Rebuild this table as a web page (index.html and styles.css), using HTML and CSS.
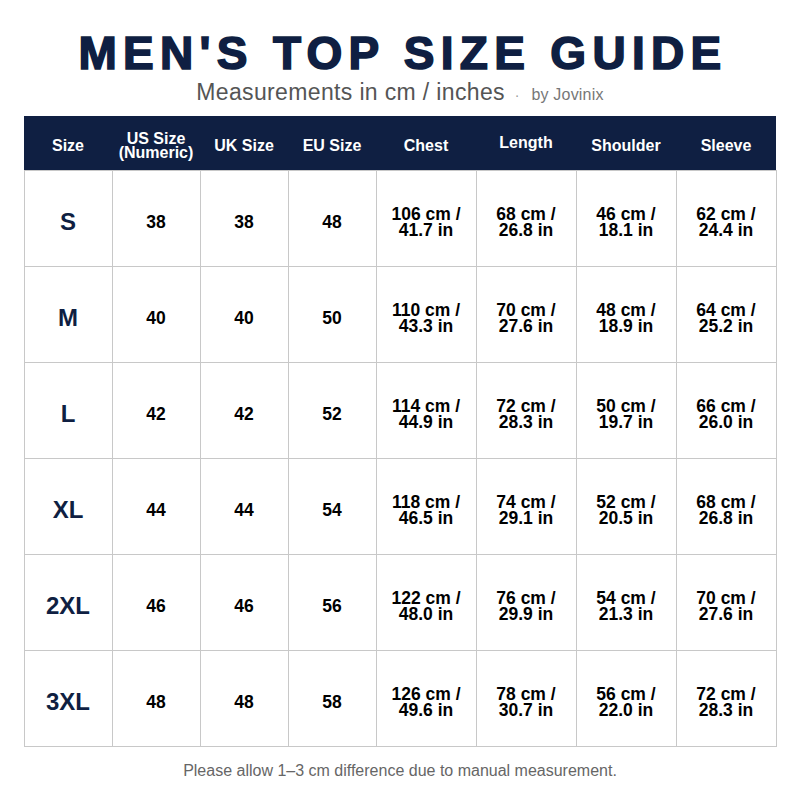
FILE: index.html
```html
<!DOCTYPE html>
<html>
<head>
<meta charset="utf-8">
<link rel="stylesheet" href="styles.css">
</head>
<body>
<div class="page">
  <h1 class="title">MEN'S TOP SIZE GUIDE</h1>
  <div class="subtitle">Measurements in cm / inches <span class="dot">·</span> <span class="brand">by Jovinix</span></div>
  <table class="chart">
    <colgroup>
      <col class="c-sm"><col class="c-sm"><col class="c-sm"><col class="c-sm">
      <col class="c-lg"><col class="c-lg"><col class="c-lg"><col class="c-lg">
    </colgroup>
    <thead>
      <tr>
        <th>Size</th>
        <th class="two">US Size<br>(Numeric)</th>
        <th>UK Size</th>
        <th>EU Size</th>
        <th>Chest</th>
        <th><span class="raised">Length</span></th>
        <th>Shoulder</th>
        <th>Sleeve</th>
      </tr>
    </thead>
    <tbody>
      <tr><td class="size">S</td><td>38</td><td>38</td><td>48</td><td>106 cm /<br>41.7 in</td><td>68 cm /<br>26.8 in</td><td>46 cm /<br>18.1 in</td><td>62 cm /<br>24.4 in</td></tr>
      <tr><td class="size">M</td><td>40</td><td>40</td><td>50</td><td>110 cm /<br>43.3 in</td><td>70 cm /<br>27.6 in</td><td>48 cm /<br>18.9 in</td><td>64 cm /<br>25.2 in</td></tr>
      <tr><td class="size">L</td><td>42</td><td>42</td><td>52</td><td>114 cm /<br>44.9 in</td><td>72 cm /<br>28.3 in</td><td>50 cm /<br>19.7 in</td><td>66 cm /<br>26.0 in</td></tr>
      <tr><td class="size">XL</td><td>44</td><td>44</td><td>54</td><td>118 cm /<br>46.5 in</td><td>74 cm /<br>29.1 in</td><td>52 cm /<br>20.5 in</td><td>68 cm /<br>26.8 in</td></tr>
      <tr><td class="size">2XL</td><td>46</td><td>46</td><td>56</td><td>122 cm /<br>48.0 in</td><td>76 cm /<br>29.9 in</td><td>54 cm /<br>21.3 in</td><td>70 cm /<br>27.6 in</td></tr>
      <tr><td class="size">3XL</td><td>48</td><td>48</td><td>58</td><td>126 cm /<br>49.6 in</td><td>78 cm /<br>30.7 in</td><td>56 cm /<br>22.0 in</td><td>72 cm /<br>28.3 in</td></tr>
    </tbody>
  </table>
  <p class="note">Please allow 1–3 cm difference due to manual measurement.</p>
</div>
</body>
</html>
```

FILE: styles.css
```css
html, body {
  margin: 0;
  padding: 0;
  background: #ffffff;
}
.page {
  width: 800px;
  display: flex;
  flex-direction: column;
  align-items: center;
  font-family: "Liberation Sans", Arial, sans-serif;
}
.title {
  margin: 30px 0 0 6px;
  font-size: 46px;
  line-height: 46px;
  font-weight: 700;
  letter-spacing: 6.3px;
  color: #0f1f42;
  -webkit-text-stroke: 1.6px #0f1f42;
}
.subtitle {
  margin-top: 3px;
  font-size: 23px;
  line-height: 26px;
  letter-spacing: 0.35px;
  color: #555555;
}
.dot {
  font-size: 14px;
  line-height: 14px;
  color: #999999;
  padding: 0 5px 0 3px;
}
.brand {
  font-size: 16px;
  line-height: 16px;
  letter-spacing: 0.2px;
  color: #777777;
}
.chart {
  margin-top: 11px;
  border-collapse: collapse;
  table-layout: fixed;
  width: 753px;
}
.c-sm { width: 88px; }
.c-lg { width: 100px; }
.chart thead tr {
  height: 54px;
}
.chart th {
  background: #0f1f42;
  color: #ffffff;
  font-size: 16px;
  font-weight: 700;
  padding: 6px 0 0 0;
  line-height: 16px;
  text-align: center;
  vertical-align: middle;
}
.chart th .raised {
  display: inline-block;
  margin-bottom: 5px;
}
.chart th.two {
  line-height: 14px;
}
.chart tbody tr {
  height: 96px;
}
.chart td {
  border: 1px solid #c8c8c8;
  padding: 8px 0 0 0;
  text-align: center;
  vertical-align: middle;
  font-size: 17.5px;
  font-weight: 700;
  line-height: 16px;
  color: #000000;
}
.chart td.size {
  font-size: 24px;
  line-height: 24px;
  color: #0f1f42;
}
.note {
  margin: 15px 0 0 0;
  font-size: 16px;
  line-height: 18px;
  color: #666666;
}
```
